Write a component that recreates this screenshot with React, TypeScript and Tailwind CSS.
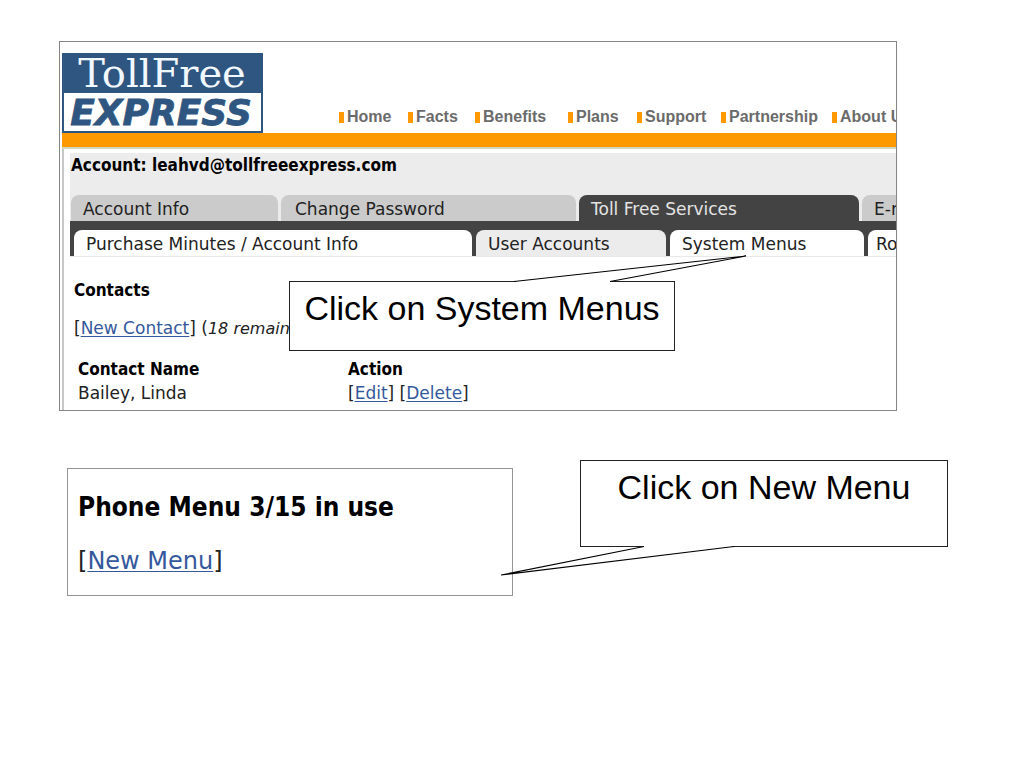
import React from "react";

const navItems = [
  { label: "Home", width: "w-[69px]" },
  { label: "Facts", width: "w-[67px]" },
  { label: "Benefits", width: "w-[93px]" },
  { label: "Plans", width: "w-[69px]" },
  { label: "Support", width: "w-[84px]" },
  { label: "Partnership", width: "w-[111px]" },
  { label: "About Us", width: "w-[100px]" },
];

const tabs = [
  { label: "Account Info", style: "w-[207px] bg-[#cbcbcb] text-[#222] pl-3" },
  { label: "Change Password", style: "w-[295px] bg-[#cbcbcb] text-[#222] pl-3.5" },
  { label: "Toll Free Services", style: "w-[280px] bg-[#434343] text-[#e4e4e4] pl-3" },
  { label: "E-mail", style: "w-[120px] bg-[#cbcbcb] text-[#222] pl-3" },
];

const subTabs = [
  { label: "Purchase Minutes / Account Info", style: "w-[398px] bg-white pl-3" },
  { label: "User Accounts", style: "w-[190px] bg-[#ececec] pl-3" },
  { label: "System Menus", style: "w-[194px] bg-white pl-3" },
  { label: "Routing", style: "w-[120px] bg-white pl-2" },
];

const bold = "font-['DejaVu_Sans_Condensed','DejaVu_Sans',sans-serif] font-bold";

function TextLink({ children }: { children: React.ReactNode }) {
  return (
    <a href="#" className="text-[#35589c] underline decoration-1 underline-offset-2">
      {children}
    </a>
  );
}

function Logo() {
  return (
    <svg viewBox="0 0 201 80" className="h-20 w-[201px] shrink-0" role="img" aria-label="TollFree Express">
      <rect width="201" height="80" fill="#2f5680" />
      <rect x="2" y="40" width="197" height="38" fill="#fff" />
      <text x="100" y="34" textAnchor="middle" fontSize="40" fill="#f2f8ff" fontFamily="'DejaVu Serif', serif">
        TollFree
      </text>
      <text
        x="99"
        y="72"
        textAnchor="middle"
        fontSize="36"
        fontWeight="700"
        fontStyle="italic"
        fill="#2f5680"
        stroke="#2f5680"
        strokeWidth="0.8"
        fontFamily="'DejaVu Sans', sans-serif"
      >
        EXPRESS
      </text>
    </svg>
  );
}

function AccountPage() {
  return (
    <section className="h-[370px] overflow-hidden border border-[#858585] bg-white pl-0.5 pt-[11px]">
      <header className="flex items-end">
        <Logo />
        <nav className="ml-[76px] flex whitespace-nowrap pb-1.5 font-['Liberation_Sans',sans-serif] text-base font-bold leading-5 text-[#6b6b6b]">
          {navItems.map((item) => (
            <a key={item.label} href="#" className={`flex shrink-0 items-center gap-[3px] ${item.width}`}>
              <span className="h-[11px] w-[5px] bg-[#ff9900]" />
              {item.label}
            </a>
          ))}
        </nav>
      </header>
      <div className="h-4 border-b-2 border-[#d5d5c0] bg-[#ff9900]" />
      <div className="h-[270px] border-l-2 border-[#c8c8c8] pl-1.5 pt-1">
        <div className="bg-[#ececec]">
          <h1 className={`${bold} h-[42px] pl-px text-[17px] leading-6 text-black`}>
            Account: leahvd@tollfreeexpress.com
          </h1>
          <nav className="flex gap-[3px] overflow-hidden whitespace-nowrap pl-px">
            {tabs.map((tab) => (
              <a key={tab.label} href="#" className={`h-[26px] shrink-0 rounded-t-lg text-[17px] leading-7 ${tab.style}`}>
                {tab.label}
              </a>
            ))}
          </nav>
        </div>
        <nav className="flex gap-1 overflow-hidden whitespace-nowrap border-b border-[#e8e8e8] bg-[#434343] pl-1 pt-[9px]">
          {subTabs.map((tab) => (
            <a key={tab.label} href="#" className={`h-[26px] shrink-0 rounded-t-lg text-[17px] leading-7 text-[#222] ${tab.style}`}>
              {tab.label}
            </a>
          ))}
        </nav>
        <div className="pl-1 pt-[21px] text-[17px] leading-6 text-[#222]">
          <h2 className={`${bold} text-black`}>Contacts</h2>
          <p className="mt-3.5">
            [<TextLink>New Contact</TextLink>] (<em className="text-base">18 remain</em>
          </p>
          <table className="mt-4 text-left">
            <thead>
              <tr className={`${bold} text-black`}>
                <th className="w-[274px] pl-1">Contact Name</th>
                <th>Action</th>
              </tr>
            </thead>
            <tbody>
              <tr>
                <td className="pl-1">Bailey, Linda</td>
                <td>
                  [<TextLink>Edit</TextLink>] [<TextLink>Delete</TextLink>]
                </td>
              </tr>
            </tbody>
          </table>
        </div>
      </div>
    </section>
  );
}

function PhoneMenuPanel() {
  return (
    <section className="h-32 w-[446px] border border-[#959595] bg-white px-2.5 pt-5 text-2xl text-[#222]">
      <h2 className={`${bold} text-[26px] leading-9 text-black`}>Phone Menu 3/15 in use</h2>
      <p className="mt-4 leading-10">
        [<TextLink>New Menu</TextLink>]
      </p>
    </section>
  );
}

export default function App() {
  return (
    <main className="min-h-screen bg-white pb-8 pl-[59px] pr-8 pt-[41px] font-['DejaVu_Sans',sans-serif]">
      <div className="relative mr-[95px]">
        <AccountPage />
        <div className="absolute left-[230px] top-[240px] h-[70px] w-[386px] border border-[#222] bg-white pt-1.5 text-center font-['Liberation_Sans',sans-serif] text-[34px] leading-10 text-black">
          Click on System Menus
        </div>
        <svg viewBox="0 0 236 30" className="absolute left-[453px] top-[213px] h-[30px] w-[236px]" aria-hidden="true">
          <path d="M4 26.5 H98 V29 H4 Z" fill="#fff" />
          <path d="M2 27.5 L234 2 L98 27.5" fill="none" stroke="#000" strokeWidth="1.1" />
        </svg>
      </div>
      <div className="relative mt-[57px] pl-2">
        <PhoneMenuPanel />
        <div className="absolute -top-2 left-[521px] h-[87px] w-[368px] border border-[#222] bg-white pt-1.5 text-center font-['Liberation_Sans',sans-serif] text-[34px] leading-10 text-black">
          Click on New Menu
        </div>
        <svg viewBox="0 0 236 34" className="absolute left-[440px] top-[75px] h-[34px] w-[236px]" aria-hidden="true">
          <path d="M145 2 H233 V5 H145 Z" fill="#fff" />
          <path d="M145 3.5 L2 32 L235 3.5" fill="#fff" stroke="#000" strokeWidth="1.1" />
        </svg>
      </div>
    </main>
  );
}
